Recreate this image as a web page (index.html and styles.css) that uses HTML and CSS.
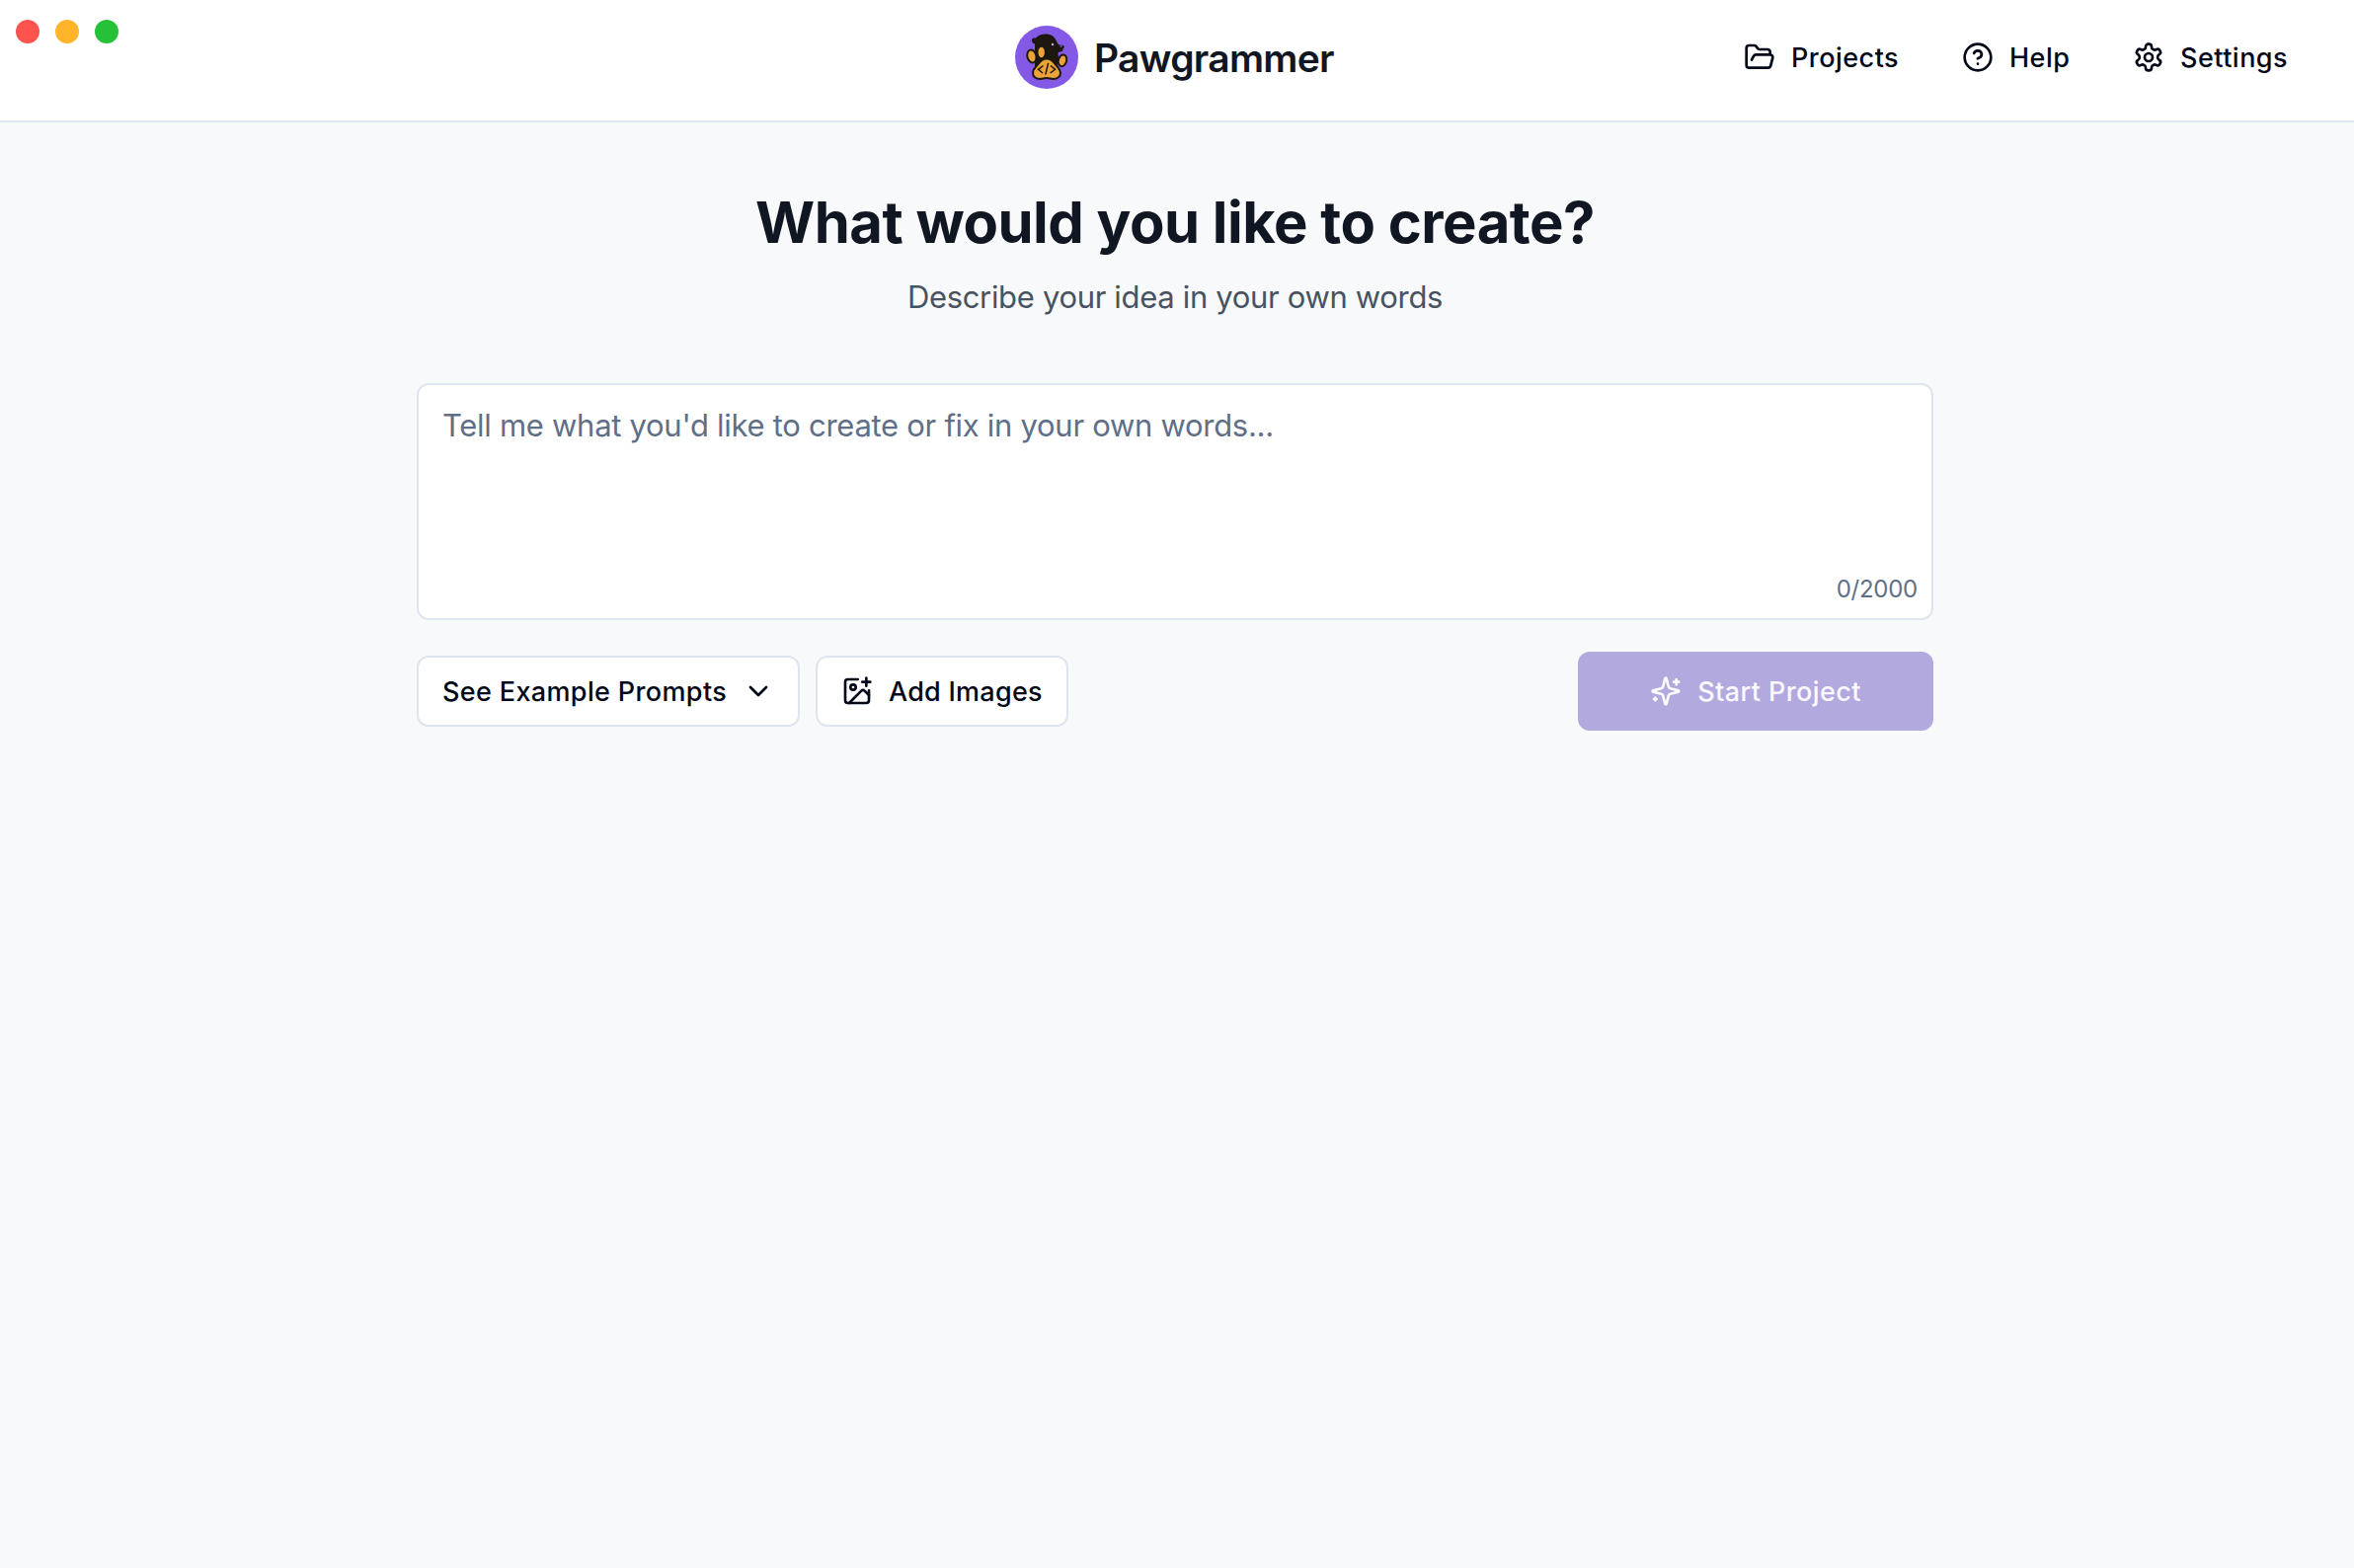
FILE: index.html
```html
<!DOCTYPE html>
<html lang="en">
<head>
<meta charset="utf-8">
<title>Pawgrammer</title>
<link rel="stylesheet" href="styles.css">
</head>
<body>
<header class="topbar">
  <div class="lights"><span class="light red"></span><span class="light amber"></span><span class="light green"></span></div>
  <div class="brand">
    <svg class="logo" viewBox="0 0 64 64">
      <circle cx="32" cy="32" r="32" fill="#8459e6"/>
      <path fill="#1d180f" d="M20 18.500C17 17.500 16 14.500 18 12.800c1-.7 2-.4 2.800 0 2.300-3 6-4.300 10-4.300 5.500 0 9.500 2.600 11.200 7.200.7 2 1.800 3.500 3.500 3.900 2.200.2 4.600.4 4.300 2-.2 1-.8 1.500-1.300 2.100.2 1.700-1.200 2.700-3 2.800-1.500.2-2 .8-1.900 2.200l1.200 8-6 8H20V29z"/>
      <circle cx="38" cy="19" r="1.200" fill="#c3aef5"/><circle cx="46.500" cy="20.800" r="1" fill="#8459e6"/>
      <g fill="#eba337" stroke="#1d180f" stroke-width="2">
        <ellipse cx="16.900" cy="31" rx="4.500" ry="6.600" transform="rotate(-14 16.900 31)"/>
        <ellipse cx="26.700" cy="27" rx="4.200" ry="6.300"/>
        <ellipse cx="48" cy="35.300" rx="4.100" ry="6" transform="rotate(14 48 35.300)"/>
        <path d="M32 33.500c4.500 0 7 3 9 5.800 2 2.700 4.700 4.600 5 8.200.2 4-3.200 6.500-7.500 6.500-2.500 0-4-.9-6.500-.9s-4 .9-6.500.9c-4.500 0-7.800-2.500-7.500-6.800.3-3.700 3.200-5.400 5.200-8.100 2-2.800 4.500-5.600 8.800-5.600z"/>
      </g>
      <path d="M28.500 40.500l-5 3.800 4.500 3.700M33.600 37.800L30.800 49.500M36 40.500l4.600 3.800-5 3.700" fill="none" stroke="#1d180f" stroke-width="1.500"/>
    </svg>
    <span class="brand-name">Pawgrammer</span>
  </div>
  <nav class="nav">
    <a class="nav-item"><svg class="icon" viewBox="0 0 24 24"><path d="m6 14 1.500-2.900A2 2 0 0 1 9.240 10H20a2 2 0 0 1 1.940 2.500l-1.540 6a2 2 0 0 1-1.950 1.500H4a2 2 0 0 1-2-2V5a2 2 0 0 1 2-2h3.900a2 2 0 0 1 1.690.9l.81 1.200a2 2 0 0 0 1.670.9H18a2 2 0 0 1 2 2v2"/></svg><span class="t-projects">Projects</span></a>
    <a class="nav-item"><svg class="icon" viewBox="0 0 24 24"><circle cx="12" cy="12" r="10"/><path d="M9.090 9a3 3 0 0 1 5.830 1c0 2-3 3-3 3M12 17h.01"/></svg><span class="t-help">Help</span></a>
    <a class="nav-item"><svg class="icon" viewBox="0 0 24 24"><path d="M12.220 2h-.44a2 2 0 0 0-2 2v.18a2 2 0 0 1-1 1.730l-.43.25a2 2 0 0 1-2 0l-.15-.08a2 2 0 0 0-2.730.73l-.22.38a2 2 0 0 0 .73 2.730l.15.1a2 2 0 0 1 1 1.720v.51a2 2 0 0 1-1 1.740l-.15.09a2 2 0 0 0-.73 2.730l.22.38a2 2 0 0 0 2.730.73l.15-.08a2 2 0 0 1 2 0l.43.25a2 2 0 0 1 1 1.730V20a2 2 0 0 0 2 2h.44a2 2 0 0 0 2-2v-.18a2 2 0 0 1 1-1.730l.43-.25a2 2 0 0 1 2 0l.15.08a2 2 0 0 0 2.730-.73l.22-.39a2 2 0 0 0-.73-2.730l-.15-.08a2 2 0 0 1-1-1.740v-.5a2 2 0 0 1 1-1.740l.15-.09a2 2 0 0 0 .73-2.730l-.22-.38a2 2 0 0 0-2.730-.73l-.15.08a2 2 0 0 1-2 0l-.43-.25a2 2 0 0 1-1-1.730V4a2 2 0 0 0-2-2z"/><circle cx="12" cy="12" r="3"/></svg><span class="t-settings">Settings</span></a>
  </nav>
</header>
<main class="main">
  <h1 class="title">What would you like to create?</h1>
  <p class="subtitle">Describe your idea in your own words</p>
  <section class="prompt">
    <p class="placeholder">Tell me what you'd like to create or fix in your own words...</p>
    <span class="count">0/2000</span>
  </section>
  <div class="actions">
    <button class="btn examples"><span class="t-examples">See Example Prompts</span><svg class="icon" viewBox="0 0 24 24"><path d="m6 9 6 6 6-6"/></svg></button>
    <button class="btn images"><svg class="icon" viewBox="0 0 24 24"><path d="M16 5h6M19 2v6M21 11.500V19a2 2 0 0 1-2 2H5a2 2 0 0 1-2-2V5a2 2 0 0 1 2-2h7.500"/><path d="m21 15-3.086-3.086a2 2 0 0 0-2.828 0L6 21"/><circle cx="9" cy="9" r="2"/></svg><span class="t-images">Add Images</span></button>
    <button class="btn start"><svg class="icon" viewBox="0 0 24 24"><path d="M9.937 15.500A2 2 0 0 0 8.500 14.063l-6.135-1.582a.5.5 0 0 1 0-.962L8.500 9.936A2 2 0 0 0 9.937 8.500l1.582-6.135a.5.5 0 0 1 .963 0L14.063 8.500A2 2 0 0 0 15.500 9.937l6.135 1.581a.5.5 0 0 1 0 .964L15.500 14.063a2 2 0 0 0-1.437 1.437l-1.582 6.135a.5.5 0 0 1-.963 0zM20 3v4M22 5h-4M4 17v2M5 18H3"/></svg><span class="t-start">Start Project</span></button>
  </div>
</main>
</body>
</html>
```
FILE: styles.css
```css
* { box-sizing: border-box; }
body { margin: 0; min-height: 1588px; background: #f8f9fb; color: #020817; font-family: Inter, "Liberation Sans", sans-serif; }
h1, p { margin: 0; }
.topbar { display: grid; grid-template-columns: 1fr auto 1fr; height: 124px; padding: 0 66px 0 16px; background: #fff; border-bottom: 2px solid #dfe5ee; }
.lights { display: flex; gap: 16px; padding-top: 20px; }
.light { width: 24px; height: 24px; border-radius: 50%; }
.red { background: #ff544d; }
.amber { background: #ffb429; }
.green { background: #25c138; }
.brand { display: flex; align-items: center; gap: 16px; height: 64px; margin-top: 26px; transform: translateX(23px); }
.logo { width: 64px; height: 64px; }
.brand-name { width: 244px; padding-top: 2px; font-size: 39px; font-weight: 600; line-height: 56px; letter-spacing: -0.73px; color: #111722; white-space: nowrap; }
.nav { display: flex; justify-content: flex-end; align-items: center; gap: 64px; height: 64px; margin-top: 26px; font-size: 27px; font-weight: 500; letter-spacing: 0.48px; }
.nav-item { display: flex; align-items: center; gap: 16px; white-space: nowrap; }
.icon { width: 32px; height: 32px; flex: none; fill: none; stroke: currentColor; stroke-width: 2; stroke-linecap: round; stroke-linejoin: round; }
.t-projects { width: 109px; }
.t-help { width: 61px; }
.t-settings { width: 110px; }
.main { width: 1536px; margin-left: 422px; padding-top: 65px; }
.title { font-size: 58px; font-weight: 700; line-height: 72px; letter-spacing: -0.51px; text-align: center; color: #111722; }
.subtitle { margin-top: 16px; font-size: 31px; line-height: 48px; letter-spacing: -0.33px; text-align: center; color: #485362; }
.prompt { display: flex; flex-direction: column; justify-content: space-between; height: 240px; margin-top: 63px; padding: 17px 14px 13px 24px; background: #fff; border: 2px solid #dfe5ee; border-radius: 12px; color: #5f6f87; }
.placeholder { font-size: 31px; line-height: 48px; letter-spacing: -0.29px; }
.count { align-self: flex-end; font-size: 24px; line-height: 32px; letter-spacing: -0.25px; }
.actions { display: flex; align-items: center; gap: 16px; margin-top: 32px; }
.btn { display: flex; align-items: center; height: 72px; padding: 0 24px; gap: 16px; background: #fff; border: 2px solid #dfe5ee; border-radius: 12px; font: 500 27px Inter, "Liberation Sans", sans-serif; letter-spacing: 0.36px; color: #020817; white-space: nowrap; }
.btn span { text-align: left; }
.examples { width: 388px; }
.t-examples { width: 288px; }
.images { width: 256px; letter-spacing: 0.25px; }
.start { width: 360px; height: 80px; margin-left: auto; justify-content: center; letter-spacing: 0.4px; background: #b2a9df; border: 0; color: #faf9fd; }
```
